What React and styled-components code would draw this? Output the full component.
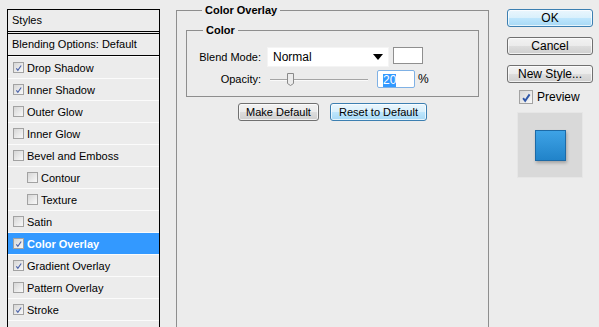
import React from 'react';
import styled, { createGlobalStyle } from 'styled-components';

const GlobalStyle = createGlobalStyle`
  html, body {
    margin: 0;
    padding: 0;
    background: #ececec;
    overflow: hidden;
  }
  body {
    font-family: "Liberation Sans", Tahoma, Arial, sans-serif;
    font-size: 11px;
    color: #000;
  }
`;

const Page = styled.div`
  display: flex;
  align-items: flex-start;
  height: 327px;
  padding: 9px 0 0 7px;
  box-sizing: border-box;
`;

/* ---------- left styles list ---------- */

const StylesPanel = styled.div`
  width: 153px;
  height: 340px;
  flex-shrink: 0;
  box-sizing: border-box;
  border: 1px solid #000;
  border-bottom: none;
`;

const PanelHead = styled.div`
  height: 21px;
  line-height: 21px;
  padding-left: 4px;
  border-bottom: 1px solid #000;
  margin-bottom: ${p => (p.$double ? '1px' : '0')};
  border-top: ${p => (p.$topLine ? '1px solid #000' : 'none')};
  white-space: nowrap;
`;

const StyleRow = styled.div`
  display: flex;
  align-items: center;
  height: 21px;
  border-top: 1px solid #fbfbfb;
  padding-left: ${p => (p.$sub ? 19 : 5)}px;
  background: ${p => (p.$active ? '#3399ff' : 'transparent')};
  color: ${p => (p.$active ? '#fff' : '#000')};
  font-weight: ${p => (p.$active ? 'bold' : 'normal')};
  white-space: nowrap;
`;

const Box = styled.span`
  display: inline-flex;
  align-items: center;
  justify-content: center;
  width: ${p => p.$size}px;
  height: ${p => p.$size}px;
  box-sizing: border-box;
  border: 1px solid #a2a2a2;
  background: linear-gradient(135deg, #d6d6d6 0%, #efefef 70%, #f8f8f8 100%);
  margin-right: ${p => p.$gap}px;
  flex-shrink: 0;
`;

function Check({ checked, size = 11, gap = 3, color = '#4a62aa', weight = 1.3 }) {
  return (
    <Box $size={size} $gap={gap}>
      {checked && (
        <svg width={size - 2} height={size - 2} viewBox="0 0 10 10">
          <path d="M2.6 6 L4.3 8.2 L8 2.8" fill="none" stroke={color} strokeWidth={weight} />
        </svg>
      )}
    </Box>
  );
}

const effects = [
  { name: 'Drop Shadow', on: true },
  { name: 'Inner Shadow', on: true },
  { name: 'Outer Glow' },
  { name: 'Inner Glow' },
  { name: 'Bevel and Emboss' },
  { name: 'Contour', sub: true },
  { name: 'Texture', sub: true },
  { name: 'Satin' },
  { name: 'Color Overlay', on: true, active: true },
  { name: 'Gradient Overlay', on: true },
  { name: 'Pattern Overlay' },
  { name: 'Stroke', on: true },
  { name: '', blank: true },
];

/* ---------- middle settings ---------- */

const Settings = styled.fieldset`
  width: 313px;
  height: 340px;
  flex-shrink: 0;
  box-sizing: border-box;
  margin: -6px 0 0 16px;
  padding: 0 9px;
  border: 1px solid #8e8e8e;
  min-width: 0;
`;

const Legend = styled.legend`
  font-weight: bold;
  font-size: 11px;
  line-height: 14px;
  padding: 0 3px;
  margin-left: ${p => p.$indent}px;
`;

const ColorGroup = styled.fieldset`
  margin: 6px 0 0 0;
  padding: 0 0 8px 0;
  border: 1px solid #8e8e8e;
  min-width: 0;
`;

const Grid = styled.div`
  display: grid;
  grid-template-columns: 74px auto;
  column-gap: 6px;
  row-gap: 3px;
  align-items: start;
  margin-top: 10px;
`;

const Label = styled.div`
  text-align: right;
  line-height: ${p => p.$h}px;
  white-space: nowrap;
`;

const Controls = styled.div`
  display: flex;
  align-items: flex-start;
`;

const Select = styled.div`
  width: 122px;
  height: 20px;
  box-sizing: border-box;
  background: #fff;
  border: 1px solid #f4f4f4;
  display: flex;
  align-items: center;
  justify-content: space-between;
  padding: 0 5px 0 5px;
  font-size: 12px;
`;

const Swatch = styled.div`
  width: 30px;
  height: 17px;
  box-sizing: border-box;
  margin-left: 4px;
  background: #fff;
  border: 1px solid #8f8f8f;
`;

const SliderWrap = styled.div`
  width: 104px;
  height: 18px;
`;

const NumField = styled.div`
  width: 38px;
  height: 18px;
  box-sizing: border-box;
  margin-left: 6px;
  background: #fff;
  border: 1px solid #7fb1e5;
  border-radius: 2px;
  padding: 2px 0 0 5px;
  font-size: 12px;
`;

const Selected = styled.span`
  background: #3399ff;
  color: #fff;
  line-height: 13px;
  display: inline-block;
`;

const Percent = styled.span`
  margin-left: 3px;
  font-size: 12px;
  line-height: 18px;
`;

const ButtonRow = styled.div`
  display: flex;
  justify-content: center;
  gap: 11px;
  margin-top: 6px;
`;

const Button = styled.div`
  width: ${p => p.$w}px;
  height: 18px;
  box-sizing: border-box;
  display: flex;
  align-items: center;
  justify-content: center;
  border: 1px solid ${p => (p.$blue ? '#3c7fb1' : '#707070')};
  border-radius: 3px;
  background: ${p =>
    p.$blue
      ? 'linear-gradient(#eaf6fd 0%, #d9f0fc 50%, #bee6fd 51%, #a7d9f5 100%)'
      : 'linear-gradient(#f2f2f2 0%, #ebebeb 50%, #dddddd 51%, #cfcfcf 100%)'};
  box-shadow: inset 0 0 0 1px rgba(255, 255, 255, 0.7);
  white-space: nowrap;
  font-size: ${p => p.$fs || 11}px;
`;

/* ---------- right column ---------- */

const Side = styled.div`
  display: flex;
  flex-direction: column;
  width: 86px;
  margin-left: 18px;
  gap: 10px;
`;

const PreviewToggle = styled.div`
  display: flex;
  align-items: center;
  height: 16px;
  margin: -4px 0 0 12px;
  font-size: 12px;
`;

const PreviewBox = styled.div`
  width: 66px;
  height: 66px;
  margin: -3px 0 0 10px;
  box-sizing: border-box;
  background: #d9d9d9;
  border: 1px solid #e6e6e6;
  display: flex;
  align-items: center;
  justify-content: center;
`;

const Swab = styled.div`
  width: 31px;
  height: 31px;
  box-sizing: border-box;
  border: 1px solid #1d6aa6;
  background: linear-gradient(#3ea3e6, #2183c9);
  box-shadow: 1px 2px 3px rgba(0, 0, 0, 0.25);
`;

function Slider() {
  return (
    <SliderWrap>
      <svg width="104" height="18" viewBox="0 0 104 18">
        <line x1="3" y1="9.5" x2="101" y2="9.5" stroke="#a5a5a5" strokeWidth="1" />
        <line x1="3" y1="10.5" x2="101" y2="10.5" stroke="#fafafa" strokeWidth="1" />
        <path d="M20.5 3.5 H26.5 V13.5 L23.5 15.5 L20.5 13.5 Z" fill="#ececec" stroke="#8a8a8a" />
      </svg>
    </SliderWrap>
  );
}

export default function App() {
  return (
    <>
      <GlobalStyle />
      <Page>
        <StylesPanel>
          <PanelHead $double>Styles</PanelHead>
          <PanelHead $topLine>Blending Options: Default</PanelHead>
          {effects.map((e, i) => (
            <StyleRow key={i} $sub={e.sub} $active={e.active}>
              {!e.blank && <Check checked={e.on} />}
              {e.name}
            </StyleRow>
          ))}
        </StylesPanel>

        <Settings>
          <Legend $indent={16}>Color Overlay</Legend>
          <ColorGroup>
            <Legend $indent={16}>Color</Legend>
            <Grid>
              <Label $h={20}>Blend Mode:</Label>
              <Controls>
                <Select>
                  <span>Normal</span>
                  <svg width="10" height="6" viewBox="0 0 10 6">
                    <path d="M0 0 H10 L5 6 Z" fill="#000" />
                  </svg>
                </Select>
                <Swatch />
              </Controls>
              <Label $h={18}>Opacity:</Label>
              <Controls>
                <Slider />
                <NumField>
                  <Selected>20</Selected>
                </NumField>
                <Percent>%</Percent>
              </Controls>
            </Grid>
          </ColorGroup>
          <ButtonRow>
            <Button $w={81}>Make Default</Button>
            <Button $w={97} $blue>Reset to Default</Button>
          </ButtonRow>
        </Settings>

        <Side>
          <Button $w={86} $blue $fs={12}>OK</Button>
          <Button $w={86} $fs={12}>Cancel</Button>
          <Button $w={86} $fs={12}>New Style...</Button>
          <PreviewToggle>
            <Check checked size={14} gap={4} color="#2f57a8" weight={1.6} />
            Preview
          </PreviewToggle>
          <PreviewBox>
            <Swab />
          </PreviewBox>
        </Side>
      </Page>
    </>
  );
}
